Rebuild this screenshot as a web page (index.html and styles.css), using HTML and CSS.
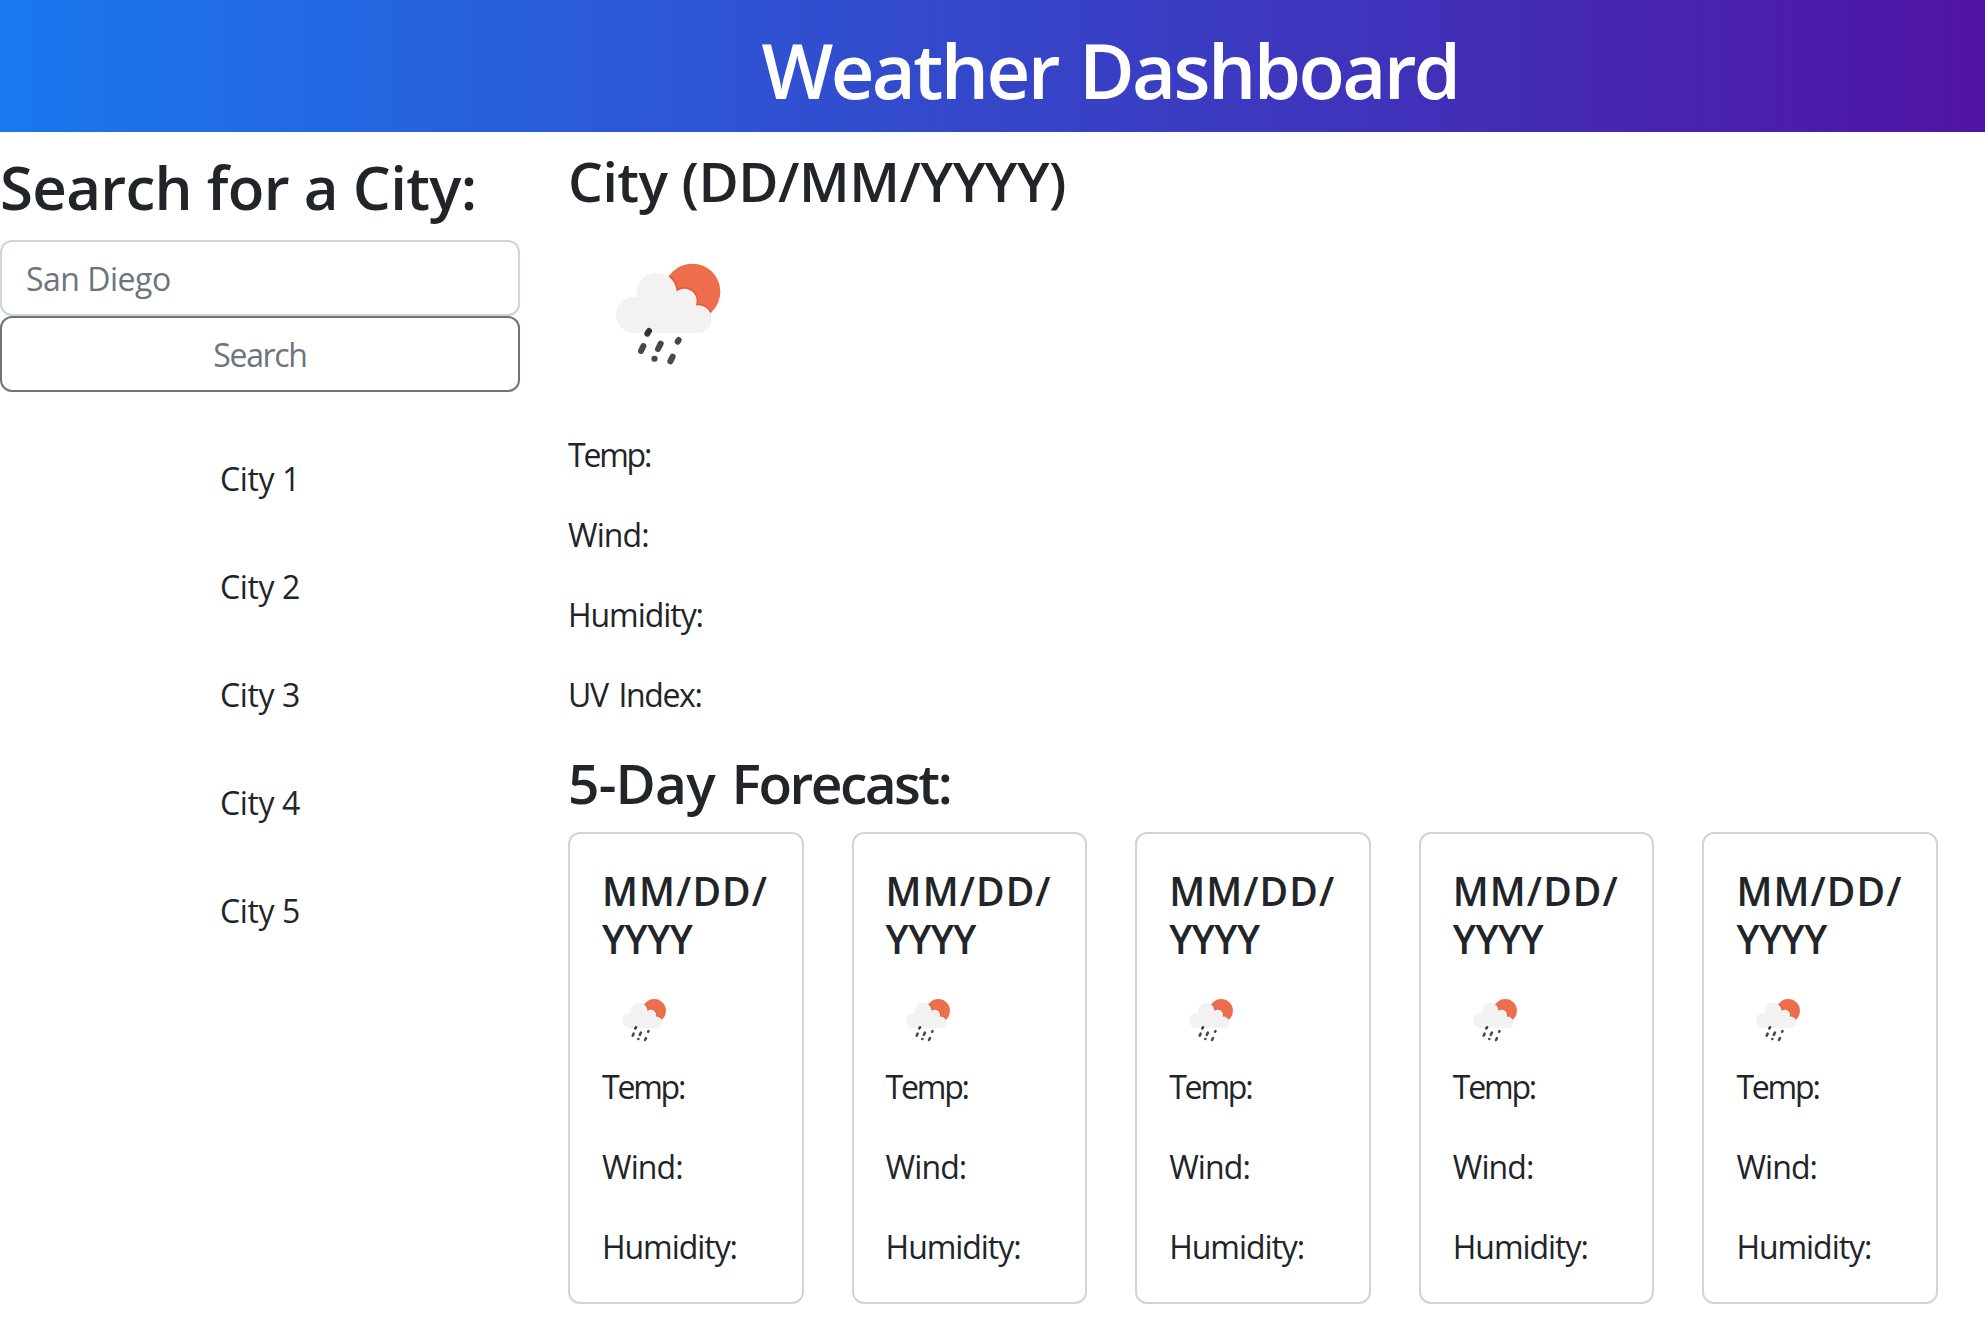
FILE: index.html
```html
<!DOCTYPE html>
<html lang="en">
<head>
<meta charset="utf-8">
<title>Weather Dashboard</title>
<link rel="stylesheet" href="styles.css">
</head>
<body>
<svg class="defs" aria-hidden="true">
  <defs>
    <clipPath id="sun-clip"><circle cx="277" cy="125" r="84"/></clipPath>
    <symbol id="rain" viewBox="-96 -102 600 600">
      <circle cx="277" cy="125" r="84" fill="#ec6e4c"/>
      <g clip-path="url(#sun-clip)" fill="#eb5534">
        <circle cx="170" cy="128" r="65"/>
        <circle cx="253" cy="152" r="41"/>
        <circle cx="295" cy="207" r="45"/>
      </g>
      <g fill="#f2f2f2">
        <circle cx="102" cy="194" r="54"/>
        <circle cx="170" cy="128" r="60"/>
        <circle cx="253" cy="153" r="37"/>
        <circle cx="294" cy="207" r="41"/>
        <path d="M102 248V150L170 100L220 130L260 150L300 175V248Z"/>
      </g>
      <g fill="none" stroke="#484848" stroke-width="18" stroke-linecap="round">
        <path d="M147 243L142 251" stroke="#333"/>
        <path d="M130 288L123 303M182 281L174 297M236 270L233 275M163 326L164 326M218 320L211 334"/>
      </g>
    </symbol>
  </defs>
</svg>

<header class="banner"><h1>Weather Dashboard</h1></header>

<div class="layout">
  <aside class="sidebar">
    <h2 class="search-title">Search for a City:</h2>
    <input class="field" type="text" placeholder="San Diego">
    <button class="search-btn" type="button">Search</button>
    <ul class="cities">
      <li>City 1</li>
      <li>City 2</li>
      <li>City 3</li>
      <li>City 4</li>
      <li>City 5</li>
    </ul>
  </aside>

  <main class="main">
    <h2 class="current-title">City (DD/MM/YYYY)</h2>
    <svg class="icon-lg"><use href="#rain"/></svg>
    <div class="stats">
      <p class="temp">Temp:</p>
      <p class="wind">Wind:</p>
      <p class="humidity">Humidity:</p>
      <p class="uv">UV Index:</p>
    </div>
    <h2 class="forecast-title"><span class="days">5-Day</span> Forecast:</h2>
    <div class="cards">
      <article class="card">
        <h3>MM/DD/<span class="year">YYYY</span></h3>
        <svg class="icon-sm"><use href="#rain"/></svg>
        <div class="stats"><p class="temp">Temp:</p><p class="wind">Wind:</p><p class="humidity">Humidity:</p></div>
      </article>
      <article class="card">
        <h3>MM/DD/<span class="year">YYYY</span></h3>
        <svg class="icon-sm"><use href="#rain"/></svg>
        <div class="stats"><p class="temp">Temp:</p><p class="wind">Wind:</p><p class="humidity">Humidity:</p></div>
      </article>
      <article class="card">
        <h3>MM/DD/<span class="year">YYYY</span></h3>
        <svg class="icon-sm"><use href="#rain"/></svg>
        <div class="stats"><p class="temp">Temp:</p><p class="wind">Wind:</p><p class="humidity">Humidity:</p></div>
      </article>
      <article class="card">
        <h3>MM/DD/<span class="year">YYYY</span></h3>
        <svg class="icon-sm"><use href="#rain"/></svg>
        <div class="stats"><p class="temp">Temp:</p><p class="wind">Wind:</p><p class="humidity">Humidity:</p></div>
      </article>
      <article class="card">
        <h3>MM/DD/<span class="year">YYYY</span></h3>
        <svg class="icon-sm"><use href="#rain"/></svg>
        <div class="stats"><p class="temp">Temp:</p><p class="wind">Wind:</p><p class="humidity">Humidity:</p></div>
      </article>
    </div>
  </main>
</div>
</body>
</html>
```
FILE: styles.css
```css
* {
  box-sizing: border-box;
}

body {
  margin: 0;
  background: #fff;
  color: #212529;
  font: 400 32px/48px "Open Sans", sans-serif;
}

h1, h2, h3, p, ul {
  margin: 0;
  padding: 0;
}

h1, h2, h3 {
  font-weight: 600;
  white-space: nowrap;
}

.defs {
  display: block;
  width: 0;
  height: 0;
}

.banner {
  height: 132px;
  padding: 24px 0 0 235px;
  background: linear-gradient(to right, #1a78ee, #5014a4);
  color: #fff;
  text-align: center;
}

.banner h1 {
  font-size: 76px;
  line-height: 92px;
  letter-spacing: -2.6px;
  word-spacing: 4px;
}

.layout {
  display: flex;
  gap: 48px;
  padding-right: 47px;
}

.sidebar {
  display: flex;
  flex-direction: column;
  width: 520px;
  padding-top: 19px;
}

.search-title {
  font-size: 60px;
  line-height: 72px;
  letter-spacing: -0.7px;
  margin-bottom: 17px;
}

.field,
.search-btn {
  width: 100%;
  height: 76px;
  margin: 0;
  border: 2px solid #ced4da;
  border-radius: 12px;
  background: #fff;
  font: inherit;
  color: #6c757d;
}

.field {
  padding: 0 24px;
  letter-spacing: -0.5px;
}

.field::placeholder {
  color: #6c757d;
  opacity: 1;
}

.search-btn {
  padding: 1px 6px 0;
  border-color: #6c757d;
  letter-spacing: -1.33px;
}

.cities {
  display: flex;
  flex-direction: column;
  gap: 60px;
  margin-top: 63px;
  list-style: none;
  text-align: center;
  letter-spacing: -0.4px;
}

.main {
  flex: 1;
  min-width: 0;
  padding-top: 16px;
}

.current-title,
.forecast-title {
  font-size: 55px;
  line-height: 66px;
}

.current-title {
  letter-spacing: -0.45px;
}

.forecast-title {
  margin: 31px 0 16px;
  letter-spacing: -2.5px;
  word-spacing: 5px;
}

.days {
  letter-spacing: -0.8px;
}

.icon-lg {
  display: block;
  width: 200px;
  height: 200px;
  margin: 2px 0 15px;
}

.stats {
  display: flex;
  flex-direction: column;
  gap: 32px;
}

.temp {
  letter-spacing: -2.2px;
}

.wind {
  letter-spacing: -0.9px;
}

.humidity {
  letter-spacing: -1.05px;
}

.uv {
  letter-spacing: -1.4px;
  word-spacing: 4px;
}

.cards {
  display: grid;
  grid-template-columns: repeat(5, minmax(0, 1fr));
  gap: 48px;
}

.card {
  height: 472px;
  padding: 33px 32px 31px;
  border: 2px solid #d3d3d3;
  border-radius: 12px;
}

.card h3 {
  font-size: 39px;
  line-height: 48px;
  letter-spacing: 1.1px;
}

.year {
  display: block;
  letter-spacing: -0.5px;
}

.icon-sm {
  display: block;
  width: 84px;
  height: 84px;
  margin-top: 16px;
}
```
